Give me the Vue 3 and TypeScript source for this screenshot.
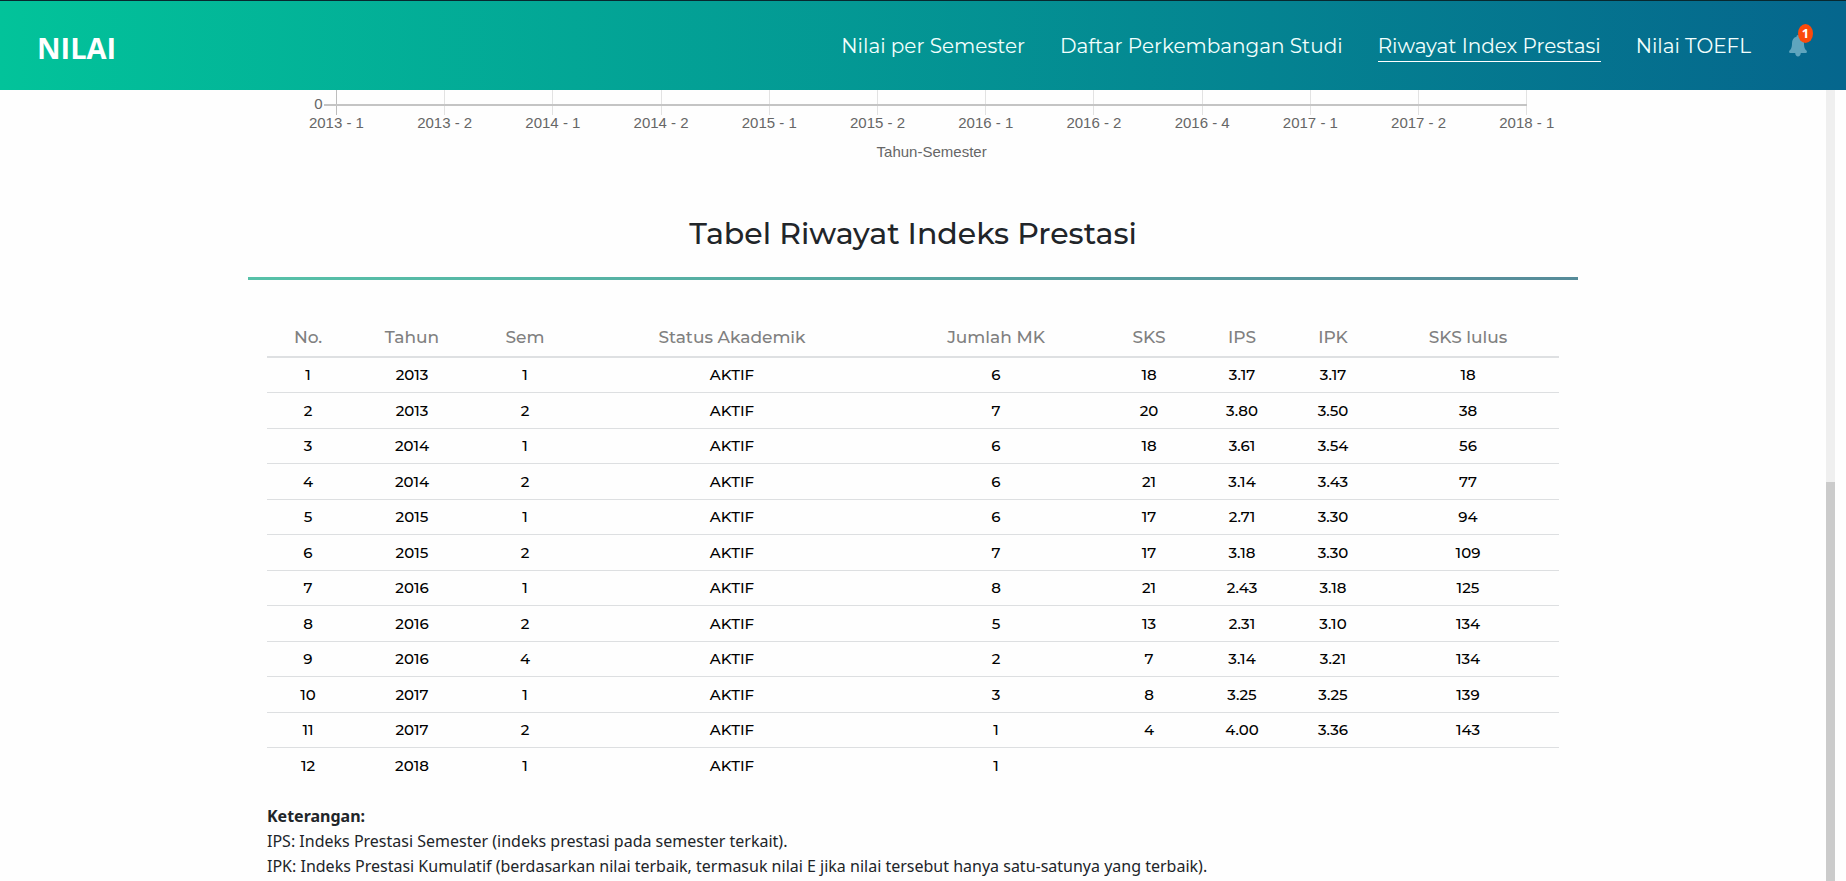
<script setup lang="ts">
interface NavItem {
  label: string
  active?: boolean
}

interface SemesterRow {
  year: number
  term: number
  status: string
  courses: number
  credits?: number
  ips?: string
  ipk?: string
  passed?: number
}

const navItems: NavItem[] = [
  { label: 'Nilai per Semester' },
  { label: 'Daftar Perkembangan Studi' },
  { label: 'Riwayat Index Prestasi', active: true },
  { label: 'Nilai TOEFL' },
]

const columns = [
  { key: 'no', label: 'No.' },
  { key: 'year', label: 'Tahun' },
  { key: 'term', label: 'Sem' },
  { key: 'status', label: 'Status Akademik' },
  { key: 'courses', label: 'Jumlah MK' },
  { key: 'credits', label: 'SKS' },
  { key: 'ips', label: 'IPS' },
  { key: 'ipk', label: 'IPK' },
  { key: 'passed', label: 'SKS lulus' },
]

const rows: SemesterRow[] = [
  { year: 2013, term: 1, status: 'AKTIF', courses: 6, credits: 18, ips: '3.17', ipk: '3.17', passed: 18 },
  { year: 2013, term: 2, status: 'AKTIF', courses: 7, credits: 20, ips: '3.80', ipk: '3.50', passed: 38 },
  { year: 2014, term: 1, status: 'AKTIF', courses: 6, credits: 18, ips: '3.61', ipk: '3.54', passed: 56 },
  { year: 2014, term: 2, status: 'AKTIF', courses: 6, credits: 21, ips: '3.14', ipk: '3.43', passed: 77 },
  { year: 2015, term: 1, status: 'AKTIF', courses: 6, credits: 17, ips: '2.71', ipk: '3.30', passed: 94 },
  { year: 2015, term: 2, status: 'AKTIF', courses: 7, credits: 17, ips: '3.18', ipk: '3.30', passed: 109 },
  { year: 2016, term: 1, status: 'AKTIF', courses: 8, credits: 21, ips: '2.43', ipk: '3.18', passed: 125 },
  { year: 2016, term: 2, status: 'AKTIF', courses: 5, credits: 13, ips: '2.31', ipk: '3.10', passed: 134 },
  { year: 2016, term: 4, status: 'AKTIF', courses: 2, credits: 7, ips: '3.14', ipk: '3.21', passed: 134 },
  { year: 2017, term: 1, status: 'AKTIF', courses: 3, credits: 8, ips: '3.25', ipk: '3.25', passed: 139 },
  { year: 2017, term: 2, status: 'AKTIF', courses: 1, credits: 4, ips: '4.00', ipk: '3.36', passed: 143 },
  { year: 2018, term: 1, status: 'AKTIF', courses: 1 },
]

// Horizontal extent of the plot area, in percent of the chart width
const plotStart = 6.65
const plotEnd = 96.15

const ticks = rows.map((row, i) => ({
  label: `${row.year} - ${row.term}`,
  x: `${plotStart + ((plotEnd - plotStart) * i) / (rows.length - 1)}%`,
}))
</script>

<template>
  <div class="page">
    <header class="topbar">
      <a class="brand" href="#">NILAI</a>
      <nav class="nav" aria-label="Menu nilai">
        <a
          v-for="item in navItems"
          :key="item.label"
          href="#"
          class="nav-link"
          :class="{ active: item.active }"
          :aria-current="item.active ? 'page' : undefined"
        >{{ item.label }}</a>
        <button class="bell" type="button" aria-label="Notifikasi">
          <svg width="18" height="22" viewBox="0 0 18 22" aria-hidden="true">
            <path
              d="M9 0C8 0 7.500 .8 7.500 1.800C4.600 2.500 3 5 3 8.200C3 12.500 2 14.200 .6 15.500C-.4 16.600 .2 18 1.500 18H6.200C6.300 20 7.400 21.500 9 21.500S11.700 20 11.800 18H16.500C17.800 18 18.400 16.600 17.400 15.500C16 14.200 15 12.500 15 8.200C15 5 13.400 2.500 10.500 1.800C10.500 .8 10 0 9 0Z"
              fill="#5fa5be"
            />
          </svg>
          <span class="badge">1</span>
        </button>
      </nav>
    </header>

    <div class="body">
      <main class="content">
        <svg class="chart" role="img" aria-label="Tahun-Semester">
          <g shape-rendering="crispEdges">
            <line
              v-for="(tick, i) in ticks"
              :key="tick.label"
              :x1="tick.x"
              :x2="tick.x"
              y1="0"
              y2="25"
              :stroke="i === 0 ? '#bdbdbd' : '#e2e2e2'"
            />
            <line x1="5.700%" :x2="`${plotEnd}%`" y1="15" y2="15" stroke="#c4c4c4" stroke-width="2" />
          </g>
          <text x="5.600%" y="19" text-anchor="end">0</text>
          <text v-for="tick in ticks" :key="tick.label" :x="tick.x" y="38" text-anchor="middle">{{ tick.label }}</text>
          <text :x="`${(plotStart + plotEnd) / 2}%`" y="67" text-anchor="middle">Tahun-Semester</text>
        </svg>

        <h1 class="title">Tabel Riwayat Indeks Prestasi</h1>
        <div class="rule"></div>

        <div class="inset">
          <table class="history">
            <colgroup>
              <col v-for="column in columns" :key="column.key" :class="`col-${column.key}`" />
            </colgroup>
            <thead>
              <tr>
                <th v-for="column in columns" :key="column.key" scope="col">{{ column.label }}</th>
              </tr>
            </thead>
            <tbody>
              <tr v-for="(row, i) in rows" :key="i">
                <td>{{ i + 1 }}</td>
                <td>{{ row.year }}</td>
                <td>{{ row.term }}</td>
                <td>{{ row.status }}</td>
                <td>{{ row.courses }}</td>
                <td>{{ row.credits }}</td>
                <td>{{ row.ips }}</td>
                <td>{{ row.ipk }}</td>
                <td>{{ row.passed }}</td>
              </tr>
            </tbody>
          </table>

          <div class="notes">
            <strong>Keterangan:</strong>
            <p>IPS: Indeks Prestasi Semester (indeks prestasi pada semester terkait).</p>
            <p>IPK: Indeks Prestasi Kumulatif (berdasarkan nilai terbaik, termasuk nilai E jika nilai tersebut hanya satu-satunya yang terbaik).</p>
          </div>
        </div>
      </main>
      <div class="rail" aria-hidden="true"><div class="thumb"></div></div>
    </div>
  </div>
</template>

<style>
body {
  margin: 0;
  background: #fefefe;
}
</style>

<style scoped>
.page {
  display: flex;
  flex-direction: column;
  min-height: 100vh;
  font-family: Montserrat, Inter, "Open Sans", sans-serif;
  font-weight: 500;
  color: #212529;
}

.topbar {
  display: flex;
  align-items: center;
  justify-content: space-between;
  box-sizing: border-box;
  height: 90px;
  padding: 0 39px 0 37px;
  border-top: 1px solid #08282f;
  background: linear-gradient(to right, #02c39a, #05668d);
}

.brand {
  font: 700 29px/40px "Segoe UI", "Open Sans", sans-serif;
  color: #fff;
  text-decoration: none;
  padding-top: 4px;
}

.nav {
  display: flex;
  align-items: center;
  gap: 35px;
}

.nav-link {
  padding-top: 2px;
  border-bottom: 1px solid transparent;
  font-size: 20px;
  font-weight: 400;
  line-height: 30px;
  color: #f2fffd;
  text-decoration: none;
}

.nav-link.active {
  border-bottom-color: #fff;
}

.bell {
  position: relative;
  width: 18px;
  height: 22px;
  margin-left: 3px;
  padding: 0;
  border: 0;
  background: none;
  cursor: pointer;
}

.bell svg {
  display: block;
}

.badge {
  position: absolute;
  left: 9px;
  top: -11px;
  width: 15px;
  height: 19px;
  border-radius: 50%;
  background: #fb4a0b;
  color: #fff;
  font: 700 13px/19px "Open Sans", sans-serif;
  text-align: center;
}

.body {
  flex: 1;
  display: flex;
}

.content {
  flex: 1;
  max-width: 1330px;
  margin: 0 auto;
}

.chart {
  display: block;
  width: 100%;
  height: 76px;
  font-family: "Liberation Sans", Arial, sans-serif;
  font-size: 15px;
  font-weight: 400;
  fill: #666;
}

.title {
  margin: 45px 0 20px;
  font-size: 30px;
  font-weight: 500;
  line-height: 46px;
  text-align: center;
}

.rule {
  height: 3px;
  background: linear-gradient(to right, #56c1a8, #568b99);
}

.inset {
  padding: 36px 19px 0;
}

.history {
  width: 100%;
  table-layout: fixed;
  border-collapse: separate;
  border-spacing: 0;
  text-align: center;
}

.history th {
  box-sizing: border-box;
  height: 42px;
  padding: 1px 0 0;
  border-bottom: 2px solid #dee0e2;
  font-size: 17px;
  font-weight: 500;
  color: #808080;
}

.history td {
  box-sizing: border-box;
  height: 35px;
  padding: 0;
  border-bottom: 1px solid #dddfe1;
  font-size: 15px;
  line-height: 24px;
  color: #000;
}

.history tr:nth-child(even) td {
  height: 36px;
}

.history tr:last-child td {
  border-bottom: 0;
}

.col-no { width: 82px; }
.col-year { width: 126px; }
.col-term { width: 100px; }
.col-status { width: 314px; }
.col-courses { width: 214px; }
.col-credits { width: 92px; }
.col-ips { width: 94px; }
.col-ipk { width: 88px; }
.col-passed { width: 182px; }

.notes {
  margin-top: 20px;
  font-family: "Segoe UI", "Noto Sans", sans-serif;
  font-size: 16px;
  font-weight: 400;
  line-height: 25px;
}

.notes p {
  margin: 0;
}

.rail {
  width: 9px;
  margin-right: 11px;
  background: #efefef;
  display: flex;
  align-items: flex-end;
}

.thumb {
  width: 100%;
  height: 50.4%;
  background: #cbcbcb;
}
</style>
